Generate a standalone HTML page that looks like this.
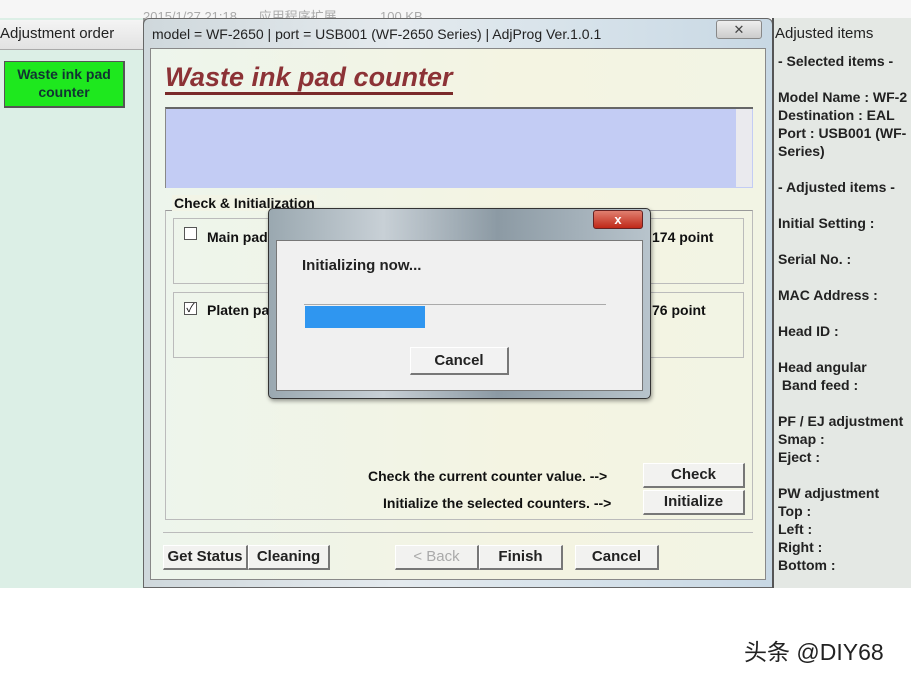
<!DOCTYPE html>
<html><head><meta charset="utf-8"><style>
*{margin:0;padding:0;box-sizing:border-box}
body{width:911px;height:681px;background:#fff;position:relative;overflow:hidden;font-family:"Liberation Sans","Noto Sans CJK SC",sans-serif;color:#111}
.a{position:absolute}
.b{font-weight:bold}
.btn{position:absolute;background:#f2f2f0;border-top:1px solid #fff;border-left:1px solid #fff;border-right:2px solid #777;border-bottom:2px solid #777;font-weight:bold;font-size:15px;text-align:center;line-height:22px;color:#222}
</style></head><body>
<div class="a" style="left:0;top:0;width:911px;height:20px;background:#f6f6f6"></div>
<div class="a" style="left:143px;top:6px;font-size:13px;color:#aaa;white-space:nowrap">2015/1/27 21:18 &nbsp;&nbsp;&nbsp;&nbsp;&nbsp;应用程序扩展 &nbsp;&nbsp;&nbsp;&nbsp;&nbsp;&nbsp;&nbsp;&nbsp;&nbsp;&nbsp;&nbsp;100 KB</div>
<div class="a" style="left:0;top:18px;width:145px;height:570px;background:#dcefe6;border-right:2px solid #999"></div>
<div class="a" style="left:0;top:20px;width:143px;height:30px;background:linear-gradient(#f4f4f4,#e2e2e2);border-bottom:1px solid #aaa;font-size:15px;line-height:28px;color:#222">Adjustment order</div>
<div class="a b" style="left:4px;top:61px;width:121px;height:47px;background:#1ee81e;border:1px solid #555;border-right:2px solid #555;border-bottom:2px solid #555;font-size:14px;text-align:center;line-height:18px;padding-top:3px;color:#133">Waste ink pad<br>counter</div>
<div class="a" style="left:143px;top:18px;width:630px;height:570px;background:linear-gradient(90deg,#cfd8dc,#e4eaee 40%,#d6e2ea 70%,#c8d8e4);border:1px solid #666;border-radius:6px 6px 0 0"></div>
<div class="a" style="left:152px;top:26px;font-size:14px;color:#222;white-space:nowrap">model = WF-2650 | port = USB001 (WF-2650 Series) | AdjProg Ver.1.0.1</div>
<div class="a" style="left:716px;top:20px;width:46px;height:19px;background:linear-gradient(#eee,#ccc);border:1px solid #888;border-radius:3px;text-align:center;font-size:13px;line-height:17px;color:#444">✕</div>
<div class="a" style="left:150px;top:48px;width:616px;height:532px;background:linear-gradient(90deg,#edf5ec,#f4f4e2 60%,#f2f4e4);border:1px solid #888"></div>
<div class="a b" style="left:165px;top:62px;font-size:27px;font-style:italic;color:#8c3236;border-bottom:3px solid #7a2a2a;line-height:30px;white-space:nowrap">Waste ink pad counter</div>
<div class="a" style="left:165px;top:107px;width:588px;height:81px;background:#c3ccf4;border-top:2px solid #666;border-left:1px solid #888"></div>
<div class="a" style="left:736px;top:109px;width:16px;height:78px;background:#eaeaee"></div>
<div class="a" style="left:165px;top:210px;width:588px;height:310px;border:1px solid #bbb;border-top:1px solid #999"></div>
<div class="a b" style="left:172px;top:195px;font-size:14px;background:#f2f4e6;padding:0 2px">Check &amp; Initialization</div>
<div class="a" style="left:173px;top:218px;width:571px;height:66px;border:1px solid #bbb"></div>
<div class="a" style="left:173px;top:292px;width:571px;height:66px;border:1px solid #bbb"></div>
<div class="a" style="left:184px;top:227px;width:13px;height:13px;border:1px solid #555;background:#fff"></div>
<div class="a b" style="left:207px;top:229px;font-size:14px">Main pad</div>
<div class="a b" style="left:652px;top:229px;font-size:14px">174 point</div>
<div class="a" style="left:184px;top:302px;width:13px;height:13px;border:1px solid #555;background:#fff;font-size:12px;line-height:11px;text-align:center">✓</div>
<div class="a b" style="left:207px;top:302px;font-size:14px">Platen pad</div>
<div class="a b" style="left:652px;top:302px;font-size:14px">76 point</div>
<div class="a b" style="left:368px;top:468px;font-size:14px;white-space:nowrap">Check the current counter value. --&gt;</div>
<div class="a b" style="left:383px;top:495px;font-size:14px;white-space:nowrap">Initialize the selected counters. --&gt;</div>
<div class="btn" style="left:643px;top:463px;width:102px;height:25px">Check</div>
<div class="btn" style="left:643px;top:490px;width:102px;height:25px">Initialize</div>
<div class="a" style="left:163px;top:532px;width:590px;height:1px;background:#bbb"></div>
<div class="btn" style="left:163px;top:545px;width:85px;height:25px">Get Status</div>
<div class="btn" style="left:248px;top:545px;width:82px;height:25px">Cleaning</div>
<div class="btn" style="left:395px;top:545px;width:84px;height:25px;color:#aaa;font-weight:normal">&lt; Back</div>
<div class="btn" style="left:479px;top:545px;width:84px;height:25px">Finish</div>
<div class="btn" style="left:575px;top:545px;width:84px;height:25px">Cancel</div>
<div class="a" style="left:772px;top:18px;width:139px;height:570px;background:#e4e8e4;border-left:2px solid #555"></div>
<div class="a" style="left:775px;top:25px;font-size:15px;color:#222">Adjusted items</div>
<div class="a b" style="left:778px;top:52px;font-size:14px;line-height:18px;color:#222;white-space:nowrap">- Selected items -<br><br>Model Name : WF-2<br>Destination : EAL<br>Port : USB001 (WF-<br>Series)<br><br>- Adjusted items -<br><br>Initial Setting :<br><br>Serial No. :<br><br>MAC Address :<br><br>Head ID :<br><br>Head angular<br>&nbsp;Band feed :<br><br>PF / EJ adjustment<br>Smap :<br>Eject :<br><br>PW adjustment<br>Top :<br>Left :<br>Right :<br>Bottom :</div>
<div class="a" style="left:268px;top:208px;width:383px;height:191px;background:linear-gradient(90deg,#9aa8b0,#c8d0d6 30%,#8c9aa4 60%,#b8c4cc);border:1px solid #333;border-radius:5px;box-shadow:1px 2px 4px rgba(0,0,0,.4)"></div>
<div class="a" style="left:593px;top:210px;width:50px;height:19px;background:linear-gradient(#e08070,#c02818);border:1px solid #622;border-radius:3px;color:#fff;text-align:center;font-size:13px;line-height:17px;font-weight:bold">x</div>
<div class="a" style="left:276px;top:240px;width:367px;height:151px;background:#f0f0f0;border:1px solid #777"></div>
<div class="a b" style="left:302px;top:257px;font-size:15px;color:#222">Initializing now...</div>
<div class="a" style="left:304px;top:304px;width:302px;height:1px;background:#aaa"></div>
<div class="a" style="left:305px;top:306px;width:120px;height:22px;background:#2f96f0"></div>
<div class="btn" style="left:410px;top:347px;width:99px;height:28px;line-height:26px;background:#f2f2f2">Cancel</div>
<div class="a" style="left:744px;top:633px;font-size:23px;color:#222;white-space:nowrap">头条 @DIY68</div>
</body></html>
